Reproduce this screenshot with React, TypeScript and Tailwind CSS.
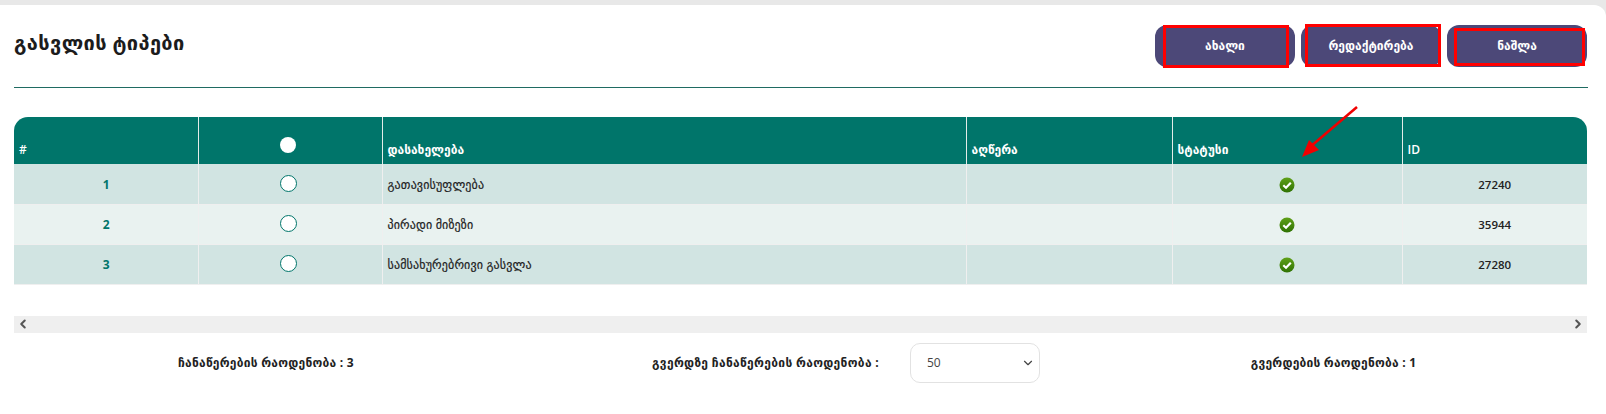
import React from "react";
import { ChevronDown, ChevronLeft, ChevronRight } from "lucide-react";

const font = "font-['Open_Sans','DejaVu_Sans',sans-serif]";

const rows = [
  { n: 1, name: "გათავისუფლება", id: 27240 },
  { n: 2, name: "პირადი მიზეზი", id: 35944 },
  { n: 3, name: "სამსახურებრივი გასვლა", id: 27280 },
];

const ActionButton = ({ label, mark }: { label: string; mark: string }) => (
  <button className="relative h-[42px] w-[140px] rounded-[12px] bg-[#4c4878] text-[12px] font-semibold text-white">
    {label}
    <span className={`absolute border-[3px] border-[#ff0000] ${mark}`} />
  </button>
);

const StatusIcon = () => (
  <svg width="16" height="16" viewBox="0 0 16 16" className="mx-auto block">
    <defs>
      <linearGradient id="ok" x1="0" y1="0" x2="0" y2="1">
        <stop offset="0" stopColor="#5fa018" />
        <stop offset="1" stopColor="#2f7204" />
      </linearGradient>
    </defs>
    <circle cx="8" cy="8" r="7.5" fill="url(#ok)" />
    <path d="M4.3 8.3 L7 10.8 L11.8 5.8" fill="none" stroke="#fff" strokeWidth="2.2" />
  </svg>
);

export default function App() {
  return (
    <div className={`relative h-[414px] w-[1606px] overflow-hidden bg-[#e8e8e8] pt-[5px] ${font}`}>
      <div className="h-full rounded-tr-[12px] bg-white px-[14px]">
        <div className="flex h-[83px] w-[1574px] items-start justify-between border-b border-[#1f6b62] pr-[1px]">
          <h1 className="pt-[24px] text-[20px] leading-[28px] font-bold tracking-[0.37px] text-[#1c1c1c]">გასვლის ტიპები</h1>
          <div className="flex gap-[6px] pt-[20px]">
            <ActionButton label="ახალი" mark="top-0 bottom-[-1px] left-[8px] right-[6px]" />
            <ActionButton label="რედაქტირება" mark="top-[-1px] bottom-0 left-[4px] right-0" />
            <ActionButton label="ნაშლა" mark="top-[3px] bottom-[1px] left-[7px] right-[2px]" />
          </div>
        </div>

        <div className="mt-[29px] w-[1573px] overflow-hidden rounded-t-[14px]">
          <table className="w-full table-fixed border-collapse text-[12px]">
            <colgroup>
              <col className="w-[184px]" />
              <col className="w-[184px]" />
              <col className="w-[584px]" />
              <col className="w-[206px]" />
              <col className="w-[230px]" />
              <col />
            </colgroup>
            <thead>
              <tr className="h-[47px] bg-[#00756a] text-left align-bottom text-white">
                <th className="border-r border-[#e4ece9] pb-[5px] pl-[5px] font-semibold">#</th>
                <th className="relative border-r border-[#e4ece9]">
                  <span className="absolute top-[20px] left-[81px] h-[16px] w-[16px] rounded-full bg-white" />
                </th>
                <th className="border-r border-[#e4ece9] pb-[5px] pl-[5px] font-semibold">დასახელება</th>
                <th className="border-r border-[#e4ece9] pb-[5px] pl-[5px] font-semibold">აღწერა</th>
                <th className="border-r border-[#e4ece9] pb-[5px] pl-[5px] font-semibold">სტატუსი</th>
                <th className="pb-[5px] pl-[5px] font-semibold">ID</th>
              </tr>
            </thead>
            <tbody>
              {rows.map((row) => (
                <tr
                  key={row.n}
                  className={`h-[40px] border-b border-[#efefef] text-[#222] ${row.n % 2 === 0 ? "bg-[#e9f2f0]" : "bg-[#d1e4e2]"}`}
                >
                  <td className="border-r border-[#efefef] pt-[2px] pl-[1px] text-center font-bold text-[#00756a]">{row.n}</td>
                  <td className="border-r border-[#efefef] pr-[3px] pb-[1px]">
                    <span className="mx-auto block h-[17px] w-[17px] rounded-full border border-[#00756a] bg-white" />
                  </td>
                  <td className="border-r border-[#efefef] pt-[2px] pl-[5px] tracking-[0.15px] [-webkit-text-stroke:0.2px]">{row.name}</td>
                  <td className="border-r border-[#efefef]" />
                  <td className="border-r border-[#efefef] pt-[2px]">
                    <StatusIcon />
                  </td>
                  <td className="pt-[2px] text-center text-[11.5px] font-semibold">{row.id}</td>
                </tr>
              ))}
            </tbody>
          </table>
        </div>

        <div className="mt-[31px] flex h-[17px] w-[1573px] items-center justify-between bg-[#efefef] px-[2px] text-[#555]">
          <ChevronLeft size={14} strokeWidth={3.5} />
          <ChevronRight size={14} strokeWidth={3.5} />
        </div>

        <div className="flex h-[60px] w-[1573px] items-center text-[12px] font-bold text-[#222]">
          <div className="w-[504px] text-center tracking-[0.25px]">ჩანაწერების რაოდენობა : 3</div>
          <div className="flex w-[562px] items-center">
            <span className="ml-[134px] w-[258px] tracking-[0.33px]">გვერდზე ჩანაწერების რაოდენობა :</span>
            <div className="flex h-[40px] w-[130px] items-center justify-between rounded-[10px] border border-[#e2e2e2] bg-white pr-[4px] pl-[16px] text-[12px] font-normal text-[#444]">
              50
              <ChevronDown size={14} strokeWidth={2} />
            </div>
          </div>
          <div className="flex-1 text-center tracking-[0.22px]">გვერდების რაოდენობა : 1</div>
        </div>
      </div>

      <svg className="absolute top-[100px] left-[1295px]" width="70" height="65" viewBox="0 0 70 65">
        <path d="M62 7 L15 47" stroke="#f00000" strokeWidth="2.5" fill="none" />
        <path d="M7 57 L14 40 L24 50 Z" fill="#f00000" />
      </svg>
    </div>
  );
}
